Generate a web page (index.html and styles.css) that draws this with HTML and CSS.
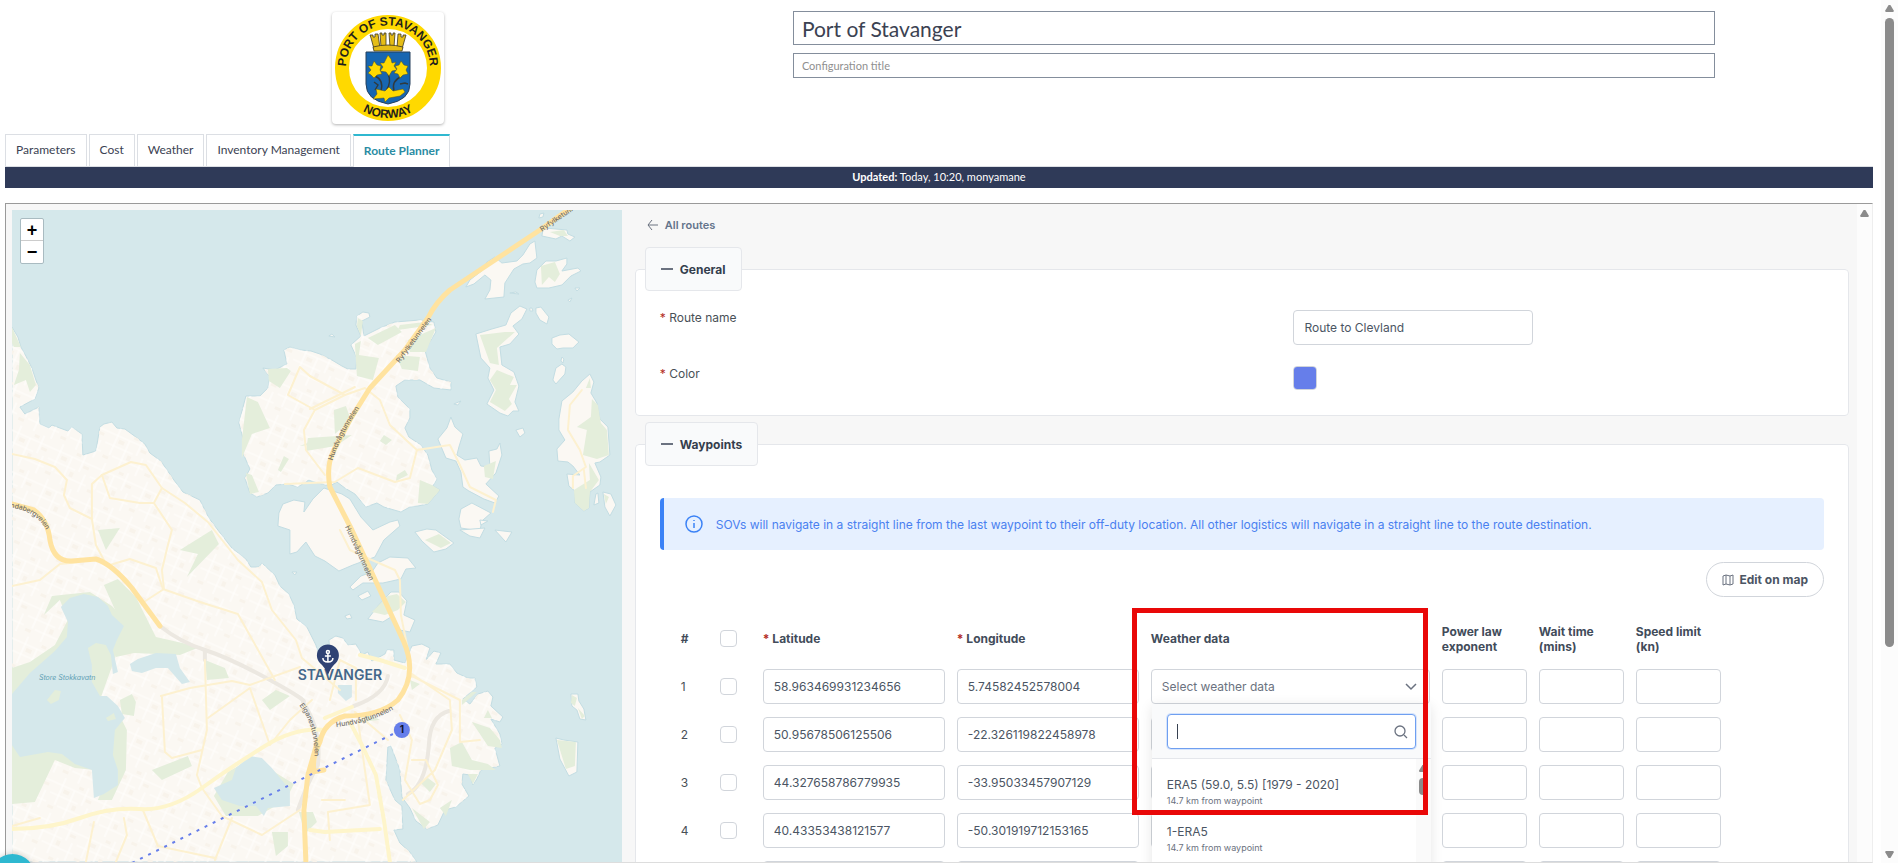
FILE: index.html
```html
<!DOCTYPE html>
<html lang="en">
<head>
    <meta charset="UTF-8">
    <meta name="viewport" content="width=device-width, initial-scale=1.0">
    <title>Port of Stavanger - Route Planner</title>
    <link rel="stylesheet" href="styles.css">
</head>
<body>
    <div class="page">
        <header class="header">
            <div class="logo">
                <svg viewBox="0 0 112 112" role="img" aria-label="Port of Stavanger Norway">
                    <defs>
                        <path id="arcTop" d="M17 71 A42 42 0 1 1 95 71"/>
                        <path id="arcBottom" d="M6 56 A50 50 0 0 0 106 56"/>
                    </defs>
                    <circle cx="56" cy="56" r="46" fill="none" stroke="#ffd900" stroke-width="14"/>
                    <text class="logo-text"><textPath href="#arcTop" startOffset="50%" text-anchor="middle">PORT OF STAVANGER</textPath></text>
                    <text class="logo-text"><textPath href="#arcBottom" startOffset="50%" text-anchor="middle">NORWAY</textPath></text>
                    <g fill="#e5bd16" stroke="#3b3620" stroke-width="0.8">
                        <path d="M42 37 L39 26 L38 23 H41 V25 H43 V22 H46 L48 36 Z"/>
                        <path d="M49 35 L48 21 H50 V23 H52 V21 H54 V35 Z"/>
                        <path d="M58 35 L57 21 H59 V23 H61 V21 H63 L62 35 Z"/>
                        <path d="M65 36 L66 22 H69 V25 H71 V23 H74 L70 37 Z"/>
                        <path d="M41 35 Q56 31 71 35 L70 39 H42 Z"/>
                    </g>
                    <path d="M34 40 H78 V72 Q78 88 56 92 Q34 88 34 72 Z" fill="#1766b1" stroke="#27405d"/>
                    <g fill="none" stroke="#303a3e" stroke-width="1.4">
                        <path d="M56 62 Q60 70 54 79"/>
                        <path d="M43 64 Q52 68 49 79"/>
                        <path d="M70 64 Q59 69 62 79"/>
                        <path d="M42 70 L46 73 L43 78 M68 72 L73 71 L76 72"/>
                    </g>
                    <g fill="#ffd900" stroke="#50501f" stroke-width="0.5">
                        <path d="M56 43 L59 47 L60 51 L64 50 L62 54 L65 58 L60 59 L57 64 L54 60 L48 59 L51 55 L48 51 L52 51 Z"/>
                        <path d="M42 49 L45 53 L49 54 L48 58 L50 62 L45 63 L42 66 L39 63 L36 61 L39 58 L36 54 L40 54 Z"/>
                        <path d="M69 49 L72 53 L76 54 L74 58 L76 62 L71 63 L68 66 L66 62 L62 61 L65 57 L63 54 L67 53 Z"/>
                        <path d="M44 77 L53 79 L57 75 L61 79 L71 77 L73 80 L68 84 L57 86 L53 90 L52 86 L41 87 L45 82 Z"/>
                    </g>
                </svg>
            </div>
            <div class="titles">
                <input class="title-input" type="text" value="Port of Stavanger" aria-label="Title">
                <input class="config-input" type="text" placeholder="Configuration title" aria-label="Configuration title">
            </div>
        </header>

        <nav class="tabs">
            <a class="tab" href="#parameters">Parameters</a>
            <a class="tab" href="#cost">Cost</a>
            <a class="tab" href="#weather">Weather</a>
            <a class="tab" href="#inventory">Inventory Management</a>
            <a class="tab active" href="#routes">Route Planner</a>
        </nav>
        <div class="updated"><strong>Updated:</strong> Today, 10:20, monyamane</div>

        <main class="frame">
            <div class="map">
                <svg class="map-canvas" viewBox="12 210 610 652" preserveAspectRatio="xMidYMin slice">
                    <defs>
                        <pattern id="streets" width="46" height="38" patternUnits="userSpaceOnUse" patternTransform="rotate(24)">
                            <path d="M0 8 H46 M0 19 H30 M12 29 H46 M9 0 V29 M22 8 V38 M34 0 V19 M41 19 V38" fill="none" stroke="#fffefc" stroke-width="1.2"/>
                            <path d="M12 11 h6 v4 h-6z M25 2 h5 v3 h-5z M26 22 h4 v5 h-4z M36 11 h6 v3 h-6z M3 31 h6 v3 h-6z" fill="#f8f3eb"/>
                        </pattern>
                        <!-- land outlines, used once for the fill and once for the streets -->
                        <path id="mainland" d="M12 327 L18 337 L21 347 L26 356 L32 368 L36 380 L39 388 L35 399 L20 407 L25 414 L39 407 L40 424 L49 428 L52 425 L68 431 L72 427 L82 434 L83 455 L96 451 L100 427 L104 424 L112 422 L117 428 L125 429 L136 437 L145 444 L150 453 L161 461 L174 480 L183 492 L200 500 L209 518 L218 530 L232 548 L237 552 L246 559 L251 567 L259 567 L262 563 L275 575 L280 586 L289 594 L294 605 L297 619 L307 627 L316 645 L320 658 L330 650 L329 640 L336 636 L343 638 L348 645 L356 644 L362 655 L368 652 L372 661 L385 654 L387 650 L394 650 L394 660 L405 663 L412 646 L422 644 L430 648 L426 660 L434 651 L441 653 L436 664 L450 664 L457 673 L468 678 L475 678 L477 687 L463 699 L470 704 L478 694 L488 691 L493 697 L491 706 L503 717 L500 722 L491 719 L500 734 L502 744 L495 748 L500 766 L481 770 L477 779 L473 785 L470 775 L463 774 L462 784 L469 796 L456 807 L445 810 L438 825 L427 829 L416 821 L410 808 L402 797 L400 770 L391 746 L388 747 L386 780 L395 800 L402 806 L403 829 L394 830 L400 843 L410 852 L417 862 H12 Z"/>
                        <path id="hundvag" d="M284 350 L290 347 L301 350 L311 351 L320 354 L332 360 L342 366 L348 369 L356 369 L357 358 L351 345 L361 336 L356 325 L357 316 L363 312 L369 313 L370 317 L362 321 L364 336 L380 328 L395 322 L420 320 L434 322 L436 332 L425 350 L430 368 L437 378 L451 382 L451 390 L434 388 L420 380 L405 380 L396 386 L398 397 L410 409 L410 418 L405 428 L409 437 L421 445 L428 455 L432 470 L437 479 L433 486 L440 490 L428 504 L418 506 L410 507 L401 512 L384 507 L377 503 L366 507 L355 494 L345 488 L337 482 L330 486 L318 483 L309 480 L298 487 L288 484 L276 485 L268 493 L257 497 L250 493 L245 478 L250 469 L243 453 L243 438 L239 423 L246 396 L260 396 L268 388 L270 377 L263 368 L275 370 L287 364 Z"/>
                        <path id="engoy" d="M279 513 L283 504 L294 500 L305 502 L304 512 L313 499 L324 488 L342 494 L350 499 L361 517 L373 530 L390 522 L398 520 L400 526 L384 540 L375 557 L353 565 L339 571 L325 561 L315 556 L306 542 L297 552 L290 554 L290 530 L278 526 Z"/>
                    </defs>

                    <g class="land">
                        <use href="#mainland"/>
                        <use href="#hundvag"/>
                        <use href="#engoy"/>
                        <path d="M350 587 L361 576 L372 572 L378 563 L390 557 L408 558 L416 568 L406 569 L401 579 L383 583 L363 583 L353 590 Z"/>
                        <path d="M368 619 L378 606 L391 592 L399 592 L407 601 L404 615 L415 620 L410 632 L400 630 L391 617 L383 622 Z"/>
                        <path d="M358 596 l10 -5 l3 5 l-9 4z M345 616 l5 -2 l2 4 l-5 1z M292 572 l5 0 l-2 3z"/>
                        <path d="M438 439 L447 428 L451 417 L455 427 L463 434 L459 447 L457 455 L465 460 L477 458 L481 466 L490 467 L489 451 L497 449 L500 443 L502 455 L496 473 L486 484 L499 496 L495 503 L484 499 L469 491 L463 487 L461 472 L456 461 L446 458 Z"/>
                        <path d="M461 509 L472 503 L491 513 L482 521 L480 531 L461 528 L459 519 Z"/>
                        <path d="M415 532 l12 -3 l9 1 l18 13 l-8 6 l-12 3 l-12 -11z M460 530 l25 -2 l-5 10 l-10 -2z M495 530 l17 2 l-6 10z"/>
                        <path d="M476 334 L492 329 L506 325 L511 313 L520 306 L527 309 L522 319 L513 326 L519 334 L510 344 L500 347 L502 365 L514 372 L519 386 L515 402 L519 411 L513 411 L508 416 L500 413 L487 404 L494 390 L488 378 L490 368 L481 358 Z"/>
                        <path d="M466 287 L470 280 L483 270 L487 262 L495 257 L502 263 L517 261 L523 255 L530 244 L535 241 L537 258 L530 263 L523 264 L514 269 L505 283 L504 297 L485 299 L490 290 L491 280 L485 275 L474 284 Z"/>
                        <path d="M543 230 L545 228 L556 229 L567 230 L568 234 L575 237 L570 241 L562 236 L556 239 L542 236 Z"/>
                        <path d="M535 282 L537 270 L546 261 L556 261 L567 258 L567 264 L562 271 L578 268 L581 271 L571 276 L562 285 L549 288 L537 288 Z"/>
                        <path d="M536 308 l5 -1 l8 10 l-2 7 l-7 -4 l-4 -7z M530 308 l2 0 l1 3 l-3 0z M552 338 l8 -3 l9 -1 l10 8 l-6 6 l-10 0 l-6 1 l-5 -5z"/>
                        <path d="M562 357 l2 2 l-1 4 l-2 -2z M556 368 l6 -4 l4 3 l-1 7 l-9 10 l-3 -4z M516 430 l7 -2 l2 5 l-5 4z M540 214 l4 -1 l-1 4 l-4 1z"/>
                        <path d="M590 374 L594 382 L591 393 L597 403 L600 419 L608 427 L609 441 L610 455 L600 462 L595 463 L601 477 L600 485 L590 492 L589 508 L584 511 L575 503 L575 491 L569 486 L567 474 L580 475 L573 466 L568 462 L558 461 L557 449 L565 440 L559 430 L559 419 L562 401 L573 392 L582 381 Z"/>
                        <path d="M596 494 l2 -1 l1 10 l-5 2z M603 492 l8 2 l5 11 l-6 11 l-5 -9z"/>
                        <path d="M571 694 l7 0 l1 7 l5 8 l2 11 l-6 -1 l-3 -9 l-5 -4z M556 738 l8 2 l14 2 l-1 30 l-8 4 l-9 -17z"/>
                        <path d="M329 336 l3 -2 l3 3z M510 293 l6 -1 l3 2z M575 288 l5 0 l-3 3z M568 300 l4 -2 l-2 4z M454 404 l7 -3 l-3 4z M480 520 l8 1 l-7 4z"/>
                    </g>
                    <g fill="url(#streets)">
                        <use href="#mainland"/>
                        <use href="#hundvag"/>
                    </g>

                    <g class="park">
                        <path d="M12 327 L21 347 L14 347 L12 343 Z M20 353 L30 365 L36 385 L30 392 L26 380 L14 385 L19 370 Z"/>
                        <path d="M268 369 L287 368 L291 371 L280 388 L269 381 Z M247 397 L258 402 L270 428 L252 434 L242 458 L242 440 Z M246 473 L252 475 L259 492 L250 494 Z M284 456 L289 459 L281 472 L278 470 Z M300 446 L320 438 L320 444 Z"/>
                        <path d="M358 318 l5 3 l-2 15 l-4 -10z M368 338 L395 325 L402 332 L378 345 Z M355 344 l6 -3 l-2 14 l20 3 l-6 22 l-16 -4z M400 325 l25 -3 l8 3 l-35 5z M408 340 l28 -12 l-10 24 l-16 0z M396 355 l24 2 l-2 14 l-16 -2z M334 410 l12 -4 l5 14 l-16 14z M308 438 l44 -3 l-16 11 l-30 5z M420 480 l12 5 l8 5 l-12 14 l-10 -1z M397 475 l8 -5 l3 5 l-12 6z M384 435 l8 5 l-6 5 l-6 -4z"/>
                        <path d="M480 335 L505 332 L515 332 L497 348 L499 365 L490 363 Z M497 370 L514 377 L510 385 L517 385 L509 399 L512 404 L505 411 L490 402 L496 390 L490 380 Z M541 266 L555 262 L560 274 L555 282 L549 277 L542 285 Z M550 232 l14 -2 l4 6 l-8 0z M484 466 l12 -5 l-3 18 l-8 -2z"/>
                        <path d="M590 378 l-4 10 h5z M592 399 L598 405 L601 423 L607 430 L609 455 L597 459 L583 455 L587 430 L577 427 L591 417 Z M574 490 L590 480 L589 463 L599 480 L590 492 L589 508 L584 511 L575 503 Z M604 494 l5 3 l-3 7z M572 695 l5 3 l-2 8 l-4 -3z M578 708 l7 8 l-3 3z M557 740 l19 2 l-1 24 l-9 3z"/>
                        <path d="M425 540 l14 -6 l12 9 l-10 5z M372 612 L388 596 L397 594 L406 602 L398 610 L385 615 Z"/>
                        <path d="M180 550 L212 530 L219 544 L187 577 L198 554 Z M98 530 l22 -2 l-14 22z M104 585 l14 -6 l18 18 l20 40 l44 10 l-20 8 l-46 -2 l-18 4 l-4 -18 l10 -14z"/>
                        <path d="M12 668 L30 662 L55 645 L68 620 L60 600 L44 615 L52 596 L90 592 L112 606 L127 622 L118 650 L100 700 L118 712 L127 730 L126 770 L112 800 L98 800 L112 765 L96 770 L75 768 L55 760 L35 802 L12 804 Z M120 700 l12 -6 l4 8 l-2 14 l-12 -2z M205 660 l20 8 l4 10 l-22 2z M262 700 l14 -10 l14 6 l-20 14z M152 770 L188 756 L192 766 L162 780 Z M228 772 l24 -14 l42 26 l-8 16 l-28 16 l-32 0 l-12 -20z M299 812 l14 0 l4 10 l-12 12z M272 832 l16 0 l0 14 l-12 10z"/>
                        <path d="M450 748 l12 -6 l10 18 l16 4 l8 6 l-26 0 l-18 -4z M472 722 l18 6 l10 12 l2 8 l-14 -2z M420 782 l8 -4 l8 6 l-6 8z M366 712 l14 8 l-20 2z M412 808 l18 14 l-6 7z M440 808 l12 -8 l-6 16z M462 700 l10 -8 l5 0 l-15 13z M484 718 l4 -8 l4 8z M468 774 l10 0 l-5 10z M410 680 l10 4 l-8 6z"/>
                    </g>
                    <g class="water">
                        <path d="M61 607 L70 598 L84 594 L98 597 L108 606 L112 615 L124 626 L117 640 L113 650 L118 672 L113 674 L111 655 L106 645 L96 643 L88 648 L92 665 L92 682 L100 696 L107 696 L118 706 L125 718 L115 730 L113 755 L118 770 L118 785 L104 794 L94 798 L92 770 L75 764 L62 754 L48 752 L20 757 L12 745 V694 L30 673 L55 651 L67 637 L68 622 Z"/>
                        <path d="M130 664 l8 -5 l18 -6 l20 1 l4 14 l10 14 l-8 2 l-14 -16 l-12 0 l-14 5 l-10 -2z"/>
                        <path d="M214 788 L232 780 L236 768 L250 756 L262 758 L272 768 L290 790 L290 806 L268 808 L264 816 L256 806 L240 806 L222 800 Z"/>
                        <path d="M338 685 h14 v12 l-6 4 l-8 -8z"/>
                    </g>
                    <path class="park" d="M47 700 l8 -10 l6 1 l-2 9 l-8 4z M106 718 l8 -5 l2 6 l-8 2z"/>

                    <g class="road tunnel">
                        <path d="M160 626 Q180 642 205 650 T270 680 T303 702 Q322 730 318 765 Q306 786 298 810"/>
                        <path d="M205 650 V660 M354 706 Q385 695 388 676 M449 711 Q430 716 429 745 Q426 785 408 794"/>
                    </g>
                    <g class="road minor">
                        <path d="M12 454 L35 459 L55 467 L67 480 L64 495 L70 508 L92 519 L92 484 L102 475 L131 462 L146 465 L162 488 L154 503 L172 530 L168 545 L162 570 L164 589 L144 602"/>
                        <path d="M102 475 L110 498 L140 503 L154 503 M162 488 L185 503 L208 522 L238 560 L262 582 L272 610 L296 640 L302 658 L340 690"/>
                        <path d="M12 586 L40 580 L60 564 L80 562 M92 519 L96 545 L104 560 M110 565 L130 559 L156 568 L163 589 L200 602 L238 614 L275 680"/>
                        <path d="M161 696 L190 688 L232 681 L250 685 L300 667 M162 696 L165 752 L172 758 L202 750 M205 660 L207 730 L197 775 L202 788"/>
                        <path d="M208 718 L250 688 L270 745 L290 720 L312 700 M232 818 L215 860 M202 788 L222 816 L262 835 L300 810 M94 822 L86 862 M124 818 L127 835 L116 862 M143 810 L158 846 L215 858"/>
                        <path d="M310 376 L345 395 L365 388 L380 400 L390 425 L417 450 L450 445 L460 465 L470 487 L496 500 L493 512"/>
                        <path d="M310 376 L300 367 L288 395 L315 410 L304 430 L306 450 L325 475 M315 410 L345 395 M310 409 L355 387 M417 450 L410 478 L395 482 L358 468 L335 482 L285 484"/>
                        <path d="M582 390 L570 405 L568 430 L580 450 L586 467 L573 476 V488 M584 470 L586 488"/>
                        <path d="M340 530 L350 550 L372 560 L395 570 L400 580 L401 615 L408 650 L410 670"/>
                        <path d="M412 674 L450 700 L452 730 L435 770 L403 800 M412 676 L460 700 L460 742 L480 740 M400 715 L412 740 L405 780 L420 804 L430 800 L438 785 L426 760 L412 760 M388 740 L355 712"/>
                        <path d="M358 720 L365 770 L370 805 L328 812 L330 840 M330 700 L340 660 L356 668 L356 700 M12 826 L40 818 M322 800 L345 800"/>
                    </g>
                    <g class="road medium">
                        <path d="M12 829 Q50 829 80 818 T140 809 T202 788 T265 746 T325 730"/>
                        <path d="M325 718 L352 707 M350 722 L362 745 L376 775 L384 820 L390 862 M360 655 L380 660 L405 668 M310 830 L325 832 L380 829"/>
                    </g>
                    <g class="road major">
                        <path d="M572 207 L540 230 L480 270 L450 290 Q436 302 428 318 L405 350 L370 388 L350 420 L334 450 Q326 466 330 487 L352 530 L380 590 L404 642 Q418 675 398 700 Q380 716 345 716 Q324 722 320 742 Q312 758 314 770"/>
                        <path d="M12 504 L34 510 Q48 520 50 540 Q54 562 72 561 L96 559 Q112 564 132 588 L160 626 M318 740 L308 775 L304 810 L306 862 M312 772 L324 770"/>
                    </g>

                    <g class="road-label">
                        <path id="ryf1" d="M541 230 L600 190"/>
                        <path id="ryf2" d="M398 362 L438 308"/>
                        <path id="hund1" d="M331 460 Q338 434 367 394"/>
                        <path id="hund2" d="M347 526 L377 592"/>
                        <path id="hund3" d="M336 725 Q374 721 402 702"/>
                        <path id="rand" d="M2 505 Q46 506 54 546"/>
                        <path id="eig" d="M301 704 Q320 728 316 770"/>
                        <text><textPath href="#ryf1">Ryfylketunnelen</textPath></text>
                        <text><textPath href="#ryf2">Ryfylketunnelen</textPath></text>
                        <text><textPath href="#hund1">Hundvågtunnelen</textPath></text>
                        <text><textPath href="#hund2">Hundvågtunnelen</textPath></text>
                        <text><textPath href="#hund3">Hundvågtunnelen</textPath></text>
                        <text><textPath href="#rand">Randabergveien</textPath></text>
                        <text><textPath href="#eig">Eiganestunnelen</textPath></text>
                    </g>
                    <text class="lake-label" x="39" y="680">Store Stokkavatn</text>
                    <text class="city-label" x="340" y="680" text-anchor="middle">STAVANGER</text>

                    <path d="M393 734 L130 864" fill="none" stroke="#667eea" stroke-width="2" stroke-dasharray="3 6"/>
                    <circle cx="402" cy="730" r="8" fill="#667eea"/>
                    <text class="marker-label" x="402" y="733" text-anchor="middle">1</text>
                    <path d="M328 675 Q325 667 320 663 A11 11 0 1 1 336 663 Q331 667 328 675 Z" fill="#2f4274"/>
                    <g fill="none" stroke="#fff" stroke-width="1.5">
                        <circle cx="328" cy="652" r="1.5"/>
                        <path d="M328 654 V662 M325 656 H331 M323 658 Q323 662 328 662 Q333 662 333 658"/>
                    </g>
                </svg>
                <div class="zoom-buttons">
                    <button type="button" title="Zoom in">+</button>
                    <button type="button" title="Zoom out">−</button>
                </div>
            </div>

            <section class="panel">
                <a class="back" href="#all">
                    <svg width="12" height="12" viewBox="0 0 12 12"><path d="M11 6 H1 M5 1 L1 6 L5 11"/></svg>
                    All routes
                </a>

                <fieldset class="card">
                    <legend>General</legend>
                    <div class="card-body general">
                        <div class="field">
                            <label for="routeName"><span class="required">*</span> Route name</label>
                            <input id="routeName" class="text-input" type="text" value="Route to Clevland">
                        </div>
                        <div class="field">
                            <label for="routeColor"><span class="required">*</span> Color</label>
                            <input id="routeColor" class="color-input" type="color" value="#667eea">
                        </div>
                    </div>
                </fieldset>

                <fieldset class="card">
                    <legend>Waypoints</legend>
                    <div class="card-body waypoints">
                        <div class="message">
                            <svg width="20" height="20" viewBox="0 0 20 20"><circle cx="10" cy="10" r="8"/><path d="M10 9 V14 M10 6 V7"/></svg>
                            <span>SOVs will navigate in a straight line from the last waypoint to their off-duty location. All other logistics will navigate in a straight line to the route destination.</span>
                        </div>
                        <button class="edit-button" type="button">
                            <svg width="12" height="12" viewBox="0 0 12 12"><path d="M1 2 L4 1 L8 2 L11 1 V10 L8 11 L4 10 L1 11 Z M4 1 V10 M8 2 V11"/></svg>
                            Edit on map
                        </button>
                        <table class="waypoint-table">
                            <thead>
                                <tr>
                                    <th class="col-index">#</th>
                                    <th class="col-check"><input type="checkbox" aria-label="Select all"></th>
                                    <th class="col-coord"><span class="required">*</span> Latitude</th>
                                    <th class="col-coord"><span class="required">*</span> Longitude</th>
                                    <th class="col-weather">Weather data<div class="highlight"></div></th>
                                    <th class="col-number">Power law exponent</th>
                                    <th class="col-number">Wait time (mins)</th>
                                    <th class="col-number">Speed limit (kn)</th>
                                </tr>
                            </thead>
                            <tbody>
                                <tr>
                                    <td class="col-index">1</td>
                                    <td class="col-check"><input type="checkbox" aria-label="Select 1"></td>
                                    <td><input class="text-input" type="text" value="58.963469931234656" aria-label="Latitude 1"></td>
                                    <td><input class="text-input" type="text" value="5.74582452578004" aria-label="Longitude 1"></td>
                                    <td>
                                        <div class="dropdown">
                                            <select class="text-input" aria-label="Weather data 1"><option>Select weather data</option></select>
                                            <svg class="chevron" width="12" height="8" viewBox="0 0 12 8"><path d="M1 1 L6 6 L11 1"/></svg>
                                            <div class="dropdown-panel">
                                                <div class="dropdown-filter">
                                                    <input class="text-input" type="text" aria-label="Filter">
                                                    <span class="caret"></span>
                                                    <svg class="search-icon" width="14" height="14" viewBox="0 0 14 14"><circle cx="6" cy="6" r="5"/><path d="M10 10 L13 13"/></svg>
                                                </div>
                                                <div class="dropdown-list">
                                                    <ul>
                                                        <li>ERA5 (59.0, 5.5) [1979 - 2020]<small>14.7 km from waypoint</small></li>
                                                        <li>1-ERA5<small>14.7 km from waypoint</small></li>
                                                    </ul>
                                                    <div class="list-scrollbar"><i class="arrow-up"></i><i class="thumb"></i></div>
                                                </div>
                                            </div>
                                        </div>
                                    </td>
                                    <td><input class="text-input" type="text" aria-label="Power law exponent 1"></td>
                                    <td><input class="text-input" type="text" aria-label="Wait time 1"></td>
                                    <td><input class="text-input" type="text" aria-label="Speed limit 1"></td>
                                </tr>
                                <tr>
                                    <td class="col-index">2</td>
                                    <td class="col-check"><input type="checkbox" aria-label="Select 2"></td>
                                    <td><input class="text-input" type="text" value="50.95678506125506" aria-label="Latitude 2"></td>
                                    <td><input class="text-input" type="text" value="-22.326119822458978" aria-label="Longitude 2"></td>
                                    <td><select class="text-input" aria-label="Weather data 2"></select></td>
                                    <td><input class="text-input" type="text" aria-label="Power law exponent 2"></td>
                                    <td><input class="text-input" type="text" aria-label="Wait time 2"></td>
                                    <td><input class="text-input" type="text" aria-label="Speed limit 2"></td>
                                </tr>
                                <tr>
                                    <td class="col-index">3</td>
                                    <td class="col-check"><input type="checkbox" aria-label="Select 3"></td>
                                    <td><input class="text-input" type="text" value="44.327658786779935" aria-label="Latitude 3"></td>
                                    <td><input class="text-input" type="text" value="-33.95033457907129" aria-label="Longitude 3"></td>
                                    <td><select class="text-input" aria-label="Weather data 3"></select></td>
                                    <td><input class="text-input" type="text" aria-label="Power law exponent 3"></td>
                                    <td><input class="text-input" type="text" aria-label="Wait time 3"></td>
                                    <td><input class="text-input" type="text" aria-label="Speed limit 3"></td>
                                </tr>
                                <tr>
                                    <td class="col-index">4</td>
                                    <td class="col-check"><input type="checkbox" aria-label="Select 4"></td>
                                    <td><input class="text-input" type="text" value="40.43353438121577" aria-label="Latitude 4"></td>
                                    <td><input class="text-input" type="text" value="-50.301919712153165" aria-label="Longitude 4"></td>
                                    <td><select class="text-input" aria-label="Weather data 4"></select></td>
                                    <td><input class="text-input" type="text" aria-label="Power law exponent 4"></td>
                                    <td><input class="text-input" type="text" aria-label="Wait time 4"></td>
                                    <td><input class="text-input" type="text" aria-label="Speed limit 4"></td>
                                </tr>
                                <tr>
                                    <td class="col-index"></td>
                                    <td class="col-check"></td>
                                    <td><input class="text-input" type="text" aria-label="Latitude 5"></td>
                                    <td><input class="text-input" type="text" aria-label="Longitude 5"></td>
                                    <td><select class="text-input" aria-label="Weather data 5"></select></td>
                                    <td><input class="text-input" type="text" aria-label="Power law exponent 5"></td>
                                    <td><input class="text-input" type="text" aria-label="Wait time 5"></td>
                                    <td><input class="text-input" type="text" aria-label="Speed limit 5"></td>
                                </tr>
                            </tbody>
                        </table>
                    </div>
                </fieldset>
            </section>
            <div class="frame-scrollbar"><i class="arrow-up"></i></div>
        </main>
    </div>
    <div class="page-scrollbar">
        <i class="arrow-up"></i>
        <div class="track"><i class="thumb"></i></div>
        <i class="arrow-down"></i>
    </div>
    <div class="help-bubble"></div>
</body>
</html>
```
FILE: styles.css
```css
* {
    box-sizing: border-box;
}
body {
    margin: 0;
    height: 100vh;
    display: flex;
    overflow: hidden;
    background-color: #fff;
    color: #495057;
    font-family: Inter, "Liberation Sans", sans-serif;
    font-size: 12px;
}
.page {
    flex: 1;
    min-width: 0;
    display: flex;
    flex-direction: column;
    padding: 0 8px 0 5px;
    font-family: Lato, "Liberation Sans", sans-serif;
}

/* header */
.header {
    display: grid;
    grid-template-columns: 41% 1fr;
    column-gap: 22px;
    padding-top: 11px;
}
.logo {
    width: 112px;
    height: 112px;
    margin: 1px auto 10px;
    border-radius: 4px;
    box-shadow: 0 1px 3px rgba(0, 0, 0, 0.3);
}
.logo svg {
    display: block;
}
.logo-text {
    font-family: "Liberation Sans", sans-serif;
    font-size: 12px;
    font-weight: bold;
    fill: #1f1f1b;
}
.titles {
    display: flex;
    flex-direction: column;
    gap: 8px;
    padding-right: 158px;
}
.titles input {
    width: 100%;
    border: 1px solid #848e9c;
    font-family: inherit;
    color: #3b4252;
    padding: 0 8px;
}
.titles .title-input {
    height: 34px;
    font-size: 21px;
}
.titles .config-input {
    height: 25px;
    font-size: 11px;
}
.config-input::placeholder {
    color: #8f8f8f;
}

/* tabs */
.tabs {
    display: flex;
    gap: 2px;
    border-bottom: 1px solid #dcdfe4;
}
.tab {
    height: 32px;
    padding: 0 10px;
    border: 1px solid #dcdfe4;
    border-bottom: none;
    line-height: 30px;
    color: #3b4252;
    text-decoration: none;
}
.tab.active {
    margin-bottom: -1px;
    height: 33px;
    border-top: 2px solid #2fb8d0;
    background-color: #fff;
    color: #2a8ca3;
    font-weight: bold;
}
.updated {
    height: 21px;
    line-height: 20px;
    background-color: #2f3a58;
    color: #fff;
    font-size: 11px;
    text-align: center;
}

.frame {
    flex: 1;
    min-height: 0;
    display: flex;
    margin: 15px 0 0;
    border: 1px solid #9a9a9a;
    border-right-color: #eee;
    border-bottom-color: #ddd;
    background-color: #f7f7f7;
    padding-left: 6px;
    overflow: hidden;
    font-family: Inter, "Liberation Sans", sans-serif;
}

/* map */
.map {
    position: relative;
    flex: 0 0 calc(33% - 4px);
    margin-top: 6px;
    background-color: #d5e8eb;
    overflow: hidden;
}
.map-canvas {
    display: block;
    width: 100%;
    height: 100%;
}
.land {
    fill: #fbf8f3;
    stroke: #c3dde3;
    stroke-width: 1;
}
.park {
    fill: #e4eedb;
}
.water {
    fill: #d5e8eb;
}
.road {
    fill: none;
    stroke-linejoin: round;
    stroke-linecap: round;
}
.minor {
    stroke: #fdf1d0;
    stroke-width: 2;
}
.medium {
    stroke: #fef5cb;
    stroke-width: 4;
}
.major {
    stroke: #ffe3a0;
    stroke-width: 5;
}
.tunnel {
    stroke: #ece8e1;
    stroke-width: 4;
}
.road-label path {
    fill: none;
}
.road-label text {
    font-size: 7px;
    font-weight: 500;
    fill: #74706a;
    dominant-baseline: middle;
}
.lake-label {
    font-size: 7px;
    font-style: italic;
    fill: #5fa0b4;
}
.city-label {
    font-size: 14px;
    font-weight: 600;
    fill: #44678a;
}
.marker-label {
    font-size: 10px;
    font-weight: bold;
    fill: #10132c;
}
.zoom-buttons {
    position: absolute;
    top: 8px;
    left: 8px;
    display: flex;
    flex-direction: column;
    border: 1px solid #a9bbc1;
    border-radius: 2px;
    background-color: #fff;
}
.zoom-buttons button {
    width: 22px;
    height: 22px;
    padding: 0;
    border: none;
    background: none;
    color: #000;
    font: bold 18px "Liberation Sans", sans-serif;
    line-height: 22px;
}
.zoom-buttons button:first-child {
    border-bottom: 1px solid #ccc;
}

/* right hand panel */
.panel {
    flex: 1;
    min-width: 0;
    padding: 13px 8px 0 13px;
}
.back {
    display: flex;
    align-items: center;
    gap: 6px;
    margin: 0 0 14px 12px;
    line-height: 16px;
    font-size: 11px;
    font-weight: 600;
    color: #64748b;
    text-decoration: none;
}
svg {
    flex: none;
}
.back svg,
.edit-button svg,
.chevron,
.search-icon,
.message svg {
    fill: none;
    stroke: #6b7280;
    stroke-width: 1;
}
.card {
    min-width: 0;
    margin: 0 0 6px;
    padding: 0 9px;
    border: 1px solid #e5e7eb;
    border-radius: 4px;
    background-color: #fff;
}
.card legend {
    display: flex;
    align-items: center;
    gap: 7px;
    height: 44px;
    padding: 0 15px;
    border: 1px solid #e5e7eb;
    border-radius: 4px;
    background-color: #f9fafb;
    color: #343e4d;
    font-weight: bold;
}
.card legend::before {
    content: "";
    width: 12px;
    height: 2px;
    background-color: #6b7280;
}
.card-body {
    padding: 0 15px;
}
.general {
    display: flex;
    flex-direction: column;
    gap: 21px;
    padding-top: 19px;
    padding-bottom: 25px;
}
.field {
    display: grid;
    grid-template-columns: 54% 240px;
    column-gap: 5px;
    line-height: 16px;
}
.required {
    color: #b32b23;
}
.text-input {
    display: block;
    width: 100%;
    height: 35px;
    padding: 0 10px;
    border: 1px solid #d1d5db;
    border-radius: 4px;
    background-color: #fff;
    color: #4b5563;
    font-family: inherit;
    font-size: 12px;
    outline: none;
    appearance: none;
}
.color-input {
    width: 24px;
    height: 24px;
    padding: 0;
    border: 1px solid #d1d5db;
    border-radius: 4px;
    background: none;
    appearance: none;
    overflow: hidden;
}
.color-input::-webkit-color-swatch-wrapper {
    padding: 0;
}
.color-input::-webkit-color-swatch {
    border: none;
}

.waypoints {
    display: flex;
    flex-direction: column;
    padding-top: 32px;
}
.message {
    display: flex;
    align-items: center;
    gap: 12px;
    height: 52px;
    margin-bottom: 12px;
    padding: 0 20px;
    border-left: 4px solid #3b82f6;
    border-radius: 4px;
    background-color: #e6f0ff;
    color: #4a80f0;
}
.message svg {
    stroke: #3b82f6;
    stroke-width: 1.5;
}
.edit-button {
    align-self: flex-end;
    display: flex;
    align-items: center;
    gap: 6px;
    height: 35px;
    margin-bottom: 17px;
    padding: 0 15px;
    border: 1px solid #d1d5db;
    border-radius: 18px;
    background-color: #fff;
    color: #4b5563;
    font-family: inherit;
    font-size: 12px;
    font-weight: bold;
}

.waypoint-table {
    width: 1067px;
    table-layout: fixed;
    border-collapse: collapse;
}
.waypoint-table th {
    height: 49px;
    padding: 0 6px;
    line-height: 15px;
    text-align: left;
    color: #424c5a;
}
.waypoint-table td {
    height: 48px;
    padding: 6px 6px 7px;
}
.waypoint-table .col-index {
    width: 41px;
    padding-left: 21px;
}
.waypoint-table .col-check {
    width: 56px;
    padding-left: 19px;
}
.col-coord {
    width: 194px;
}
.col-weather {
    position: relative;
    width: 291px;
}
.col-number {
    width: 97px;
}
input[type="checkbox"] {
    display: block;
    width: 17px;
    height: 17px;
    margin: 0;
    border: 1px solid #d1d5db;
    border-radius: 4px;
    background-color: #fff;
    appearance: none;
}

/* weather data dropdown */
.dropdown {
    position: relative;
}
.dropdown select {
    color: #6b7280;
}
.chevron {
    position: absolute;
    top: 14px;
    right: 13px;
    stroke-width: 1.5;
}
.dropdown-panel {
    position: absolute;
    top: 35px;
    left: 1px;
    width: 100%;
    z-index: 10;
    background-color: #fff;
    box-shadow: 0 2px 12px rgba(0, 0, 0, 0.1);
}
.dropdown-filter {
    position: relative;
    padding: 10px 15px 9px;
    border-bottom: 1px solid #e5e7eb;
    background-color: #f9fafb;
}
.dropdown-filter .text-input {
    border-color: #6f9ff0;
    box-shadow: 0 0 0 1px #d5e4fc;
}
.caret {
    position: absolute;
    top: 20px;
    left: 25px;
    width: 1px;
    height: 15px;
    background-color: #374151;
}
.search-icon {
    position: absolute;
    top: 21px;
    right: 23px;
    stroke-width: 1.3;
}
.dropdown-list {
    display: flex;
}
.dropdown-list ul {
    flex: 1;
    margin: 0;
    padding: 9px 0;
    list-style: none;
}
.dropdown-list li {
    padding: 8px 15px 7px;
    line-height: 18px;
    color: #4b5563;
}
.dropdown-list small {
    display: block;
    font-size: 9px;
    line-height: 14px;
    color: #6b7280;
}
.list-scrollbar {
    width: 15px;
    padding: 6px 3px;
    background-color: #fafafa;
}
.list-scrollbar .thumb {
    display: block;
    width: 9px;
    height: 17px;
    margin-top: 6px;
    border-radius: 4px;
    background-color: #8b8b8b;
}
.highlight {
    position: absolute;
    top: -6px;
    left: -13px;
    width: 296px;
    height: 207px;
    z-index: 20;
    border: 5px solid #e90808;
    pointer-events: none;
}

/* scrollbars */
.arrow-up,
.arrow-down {
    display: block;
    width: 9px;
    height: 7px;
    background-color: #8b8b8b;
    clip-path: polygon(40% 0, 60% 0, 100% 85%, 90% 100%, 10% 100%, 0 85%);
}
.arrow-down {
    transform: rotate(180deg);
}
.frame-scrollbar {
    width: 15px;
    padding: 6px 3px;
    background-color: #fcfcfc;
}
.page-scrollbar {
    display: flex;
    flex-direction: column;
    align-items: center;
    gap: 6px;
    width: 17px;
    padding: 5px 0;
    background-color: #fcfcfc;
}
.page-scrollbar .track {
    flex: 1;
}
.page-scrollbar .thumb {
    display: block;
    width: 9px;
    height: 76%;
    border-radius: 5px;
    background-color: #8b8b8b;
}
.help-bubble {
    position: fixed;
    left: -10px;
    bottom: -36px;
    width: 45px;
    height: 45px;
    border-radius: 50%;
    background-color: #2fb8d0;
    box-shadow: 0 0 6px rgba(0, 0, 0, 0.2);
}
```
